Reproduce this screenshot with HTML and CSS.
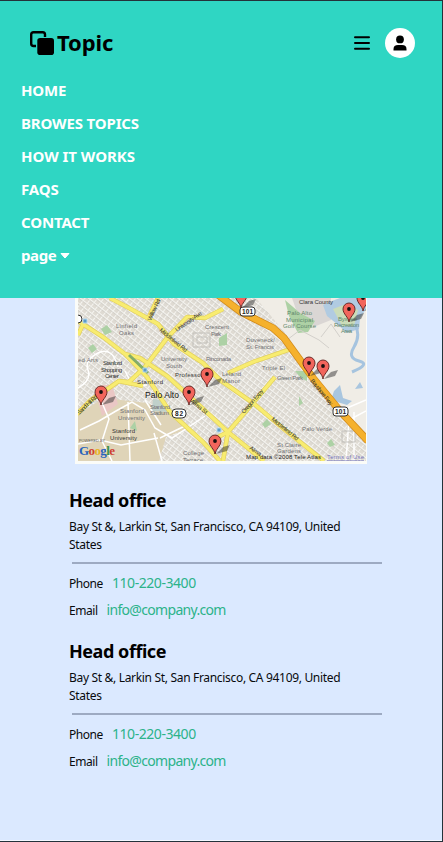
FILE: index.html
```html
<!DOCTYPE html>
<html lang="en">
<head>
<meta charset="utf-8">
<title>Topic</title>
<link rel="stylesheet" href="styles.css">
</head>
<body>
<div class="page">
<header class="header">
  <div class="bar">
    <a class="brand"><svg class="logo" viewBox="0 0 24 24"><path d="M6 15H3.500Q1.200 15 1.200 12.700V3.500Q1.200 1.200 3.500 1.200H12.700Q15 1.200 15 3.500V6" fill="none" stroke="#000" stroke-width="2.400"/><rect x="7.300" y="7" width="16.700" height="17" rx="2.800"/></svg><span>Topic</span></a>
    <div class="tools">
      <svg class="burger" viewBox="0 0 16 14"><path d="M1 1.200H15M1 7H15M1 12.800H15" stroke="#000" stroke-width="2" stroke-linecap="round"/></svg>
      <span class="avatar"><svg viewBox="0 0 14 16"><circle cx="7" cy="4.400" r="3.900"/><path d="M.5 15.500V14Q.5 9.900 5 9.900H9Q13.500 9.900 13.500 14V15.500Z"/></svg></span>
    </div>
  </div>
  <nav class="nav">
    <a class="n-home">HOME</a>
    <a class="n-browse">BROWES TOPICS</a>
    <a class="n-how">HOW IT WORKS</a>
    <a class="n-faq">FAQS</a>
    <a class="n-contact">CONTACT</a>
    <a class="n-page">page <svg class="caret" viewBox="0 0 10 6"><path d="M1 .5H9L5 5Z" fill="#fff" stroke="#fff" stroke-linejoin="round"/></svg></a>
  </nav>
</header>
<main>
  <svg class="map" viewBox="75 298 292 166">
    <defs>
      <pattern id="grid" width="5" height="5" patternUnits="userSpaceOnUse" patternTransform="rotate(38)"><rect width="5" height="5" fill="#dfdbd3"/><path d="M0 .5H5M.5 0V5" stroke="#f5f4f0" stroke-width="1"/><path d="M0 1.500H5" stroke="#c5c2bb" stroke-width=".45"/></pattern>
      <g id="pin"><path d="M1 0 8-7 15-9 12-3Z" fill="#333" opacity=".5"/><path d="M0 0C-.6-5-6-8-6-13A6 6 0 0 1 6-13C6-8 .6-5 0 0Z" fill="#f2655c" stroke="#5b201d" stroke-width=".9"/><circle cy="-13" r="1.900" fill="#17100f"/></g>
      <clipPath id="tile"><rect x="78" y="298" width="288" height="163"/></clipPath>
    </defs>
    <rect x="75" y="298" width="292" height="166" fill="#fbfcf8"/>
    <g clip-path="url(#tile)">
      <rect x="78" y="298" width="288" height="163" fill="url(#grid)"/>
      <path d="M256 298H366V440L340 410 315 378 295 348 285 333Z" fill="#f0ede6"/>
      <path d="M78 414 104 398 147 403 168 412 190 428 166 437 159 461H78Z" fill="#dfd4b8"/>
      <path d="M102 385H112L118 404 102 416 98 401Z" fill="#eac7c5"/>
      <path d="M292 298H331V320L316 326 299 318Z" fill="#dad6d4"/>
      <path d="M285 300 300 313 315 321 308 332 298 333 289 316ZM101 329 107 325 112 332 105 335ZM88 348 93 344 97 349 92 353ZM262 424 267 419 271 424 265 428ZM327 443 331 439 335 445 330 447ZM295 371H307V381L301 378ZM219 338 227 333V345L219 346ZM299 396 303 403 299 406ZM130 428 135 421 137 431Z" fill="#add1a5"/>
      <path d="M153 399 162 400 168 412 152 411Z" fill="#c0d0ca"/>
      <path d="M323 305 332 301 340 298H366V309L360 318 359 329 347 333 337 324 327 316Z" fill="#b1cbe1"/>
      <path d="M333 309 346 304 358 310 354 326 342 326Z" fill="#cbdcb9"/>
      <path d="M355 324Q361 336 354 347T359 361T352 372" fill="none" stroke="#a6c4df" stroke-width="3"/>
      <path d="M331 400 334 391 340 385 343 398 352 401 347 405ZM355 389 360 382 363 388Z" fill="#a9c6df"/>
      <g fill="none" stroke="#fff" stroke-width="1.500"><path d="M78 388Q92 380 88 370T98 353 118 367M80 430 99 421 116 411 132 402 145 410 155 428 172 438 205 416M78 444 100 440 121 445 158 438M100 398 109 419 102 441 112 461M128 402 130 461M154 433 162 461M160 438 187 425M125 371 133 386 147 385M145 400 161 425M340 411 366 400M354 412V461M346 461 349 420 366 411"/></g>
      <path d="M283 343 300 330 319 340 329 348M321 337 331 324 340 337" fill="none" stroke="#d3d0cb"/>
      <path d="M193 333H210V347H193ZM197 337H207V343H197ZM342 431H355V442H342Z" fill="none" stroke="#c2c0bb"/>
      <path class="road-edge" d="M110 298 129 308 158 324 174 344 203 363 220 380 253 403 285 430 324 461M78 321 103 337 125 354 147 377 170 412 203 442 220 461M125 354 140 358 167 376 187 394 228 432 264 461M158 298 148 319M223 309 205 318 187 317 167 338 145 367 129 382 119 381 109 388 91 400 77 414M291 349 253 362 228 373M275 377 253 403 228 432 223 461M118 381 143 386M78 335 84 322M212 440 228 432"/>
      <path class="road" d="M110 298 129 308 158 324 174 344 203 363 220 380 253 403 285 430 324 461M78 321 103 337 125 354 147 377 170 412 203 442 220 461M125 354 140 358 167 376 187 394 228 432 264 461M158 298 148 319M223 309 205 318 187 317 167 338 145 367 129 382 119 381 109 388 91 400 77 414M291 349 253 362 228 373M275 377 253 403 228 432 223 461M118 381 143 386M78 335 84 322M212 440 228 432"/>
      <path d="M129 355 148 373" stroke="#83ac69" stroke-width="3"/>
      <path d="M217 294 241 312 273 328 284 338 313 378 340 411 368 441" fill="none" stroke="#d28b1b" stroke-width="7.500"/>
      <path d="M217 294 241 312 273 328 284 338 313 378 340 411 368 441" fill="none" stroke="#f5b12d" stroke-width="6"/>
      <g class="label">
        <text x="116" y="328" textLength="21">Linfield</text><text x="119" y="335" textLength="15">Oaks</text>
        <text x="205" y="329" textLength="24">Crescent</text><text x="211" y="336" textLength="10">Park</text>
        <text x="161" y="361" textLength="26">University</text><text x="166" y="368" textLength="16">South</text>
        <text x="78" y="362" textLength="20">ed Arts</text><text x="206" y="361" textLength="25">Rinconada</text>
        <text x="246" y="342" textLength="29">Duveneck/</text><text x="246" y="349" textLength="28">St. Francis</text>
        <text x="262" y="370" textLength="23">Triple El</text><text x="222" y="376" textLength="19">Leland</text><text x="222" y="383" textLength="18">Manor</text>
        <text x="277" y="380" textLength="26">Green Park</text><text x="302" y="431" textLength="30">Palo Verde</text>
        <text x="277" y="447" textLength="24">St Claire</text><text x="277" y="453" textLength="24">Gardens</text>
        <text x="183" y="455" textLength="21">College</text><text x="183" y="462" textLength="20">Terrace</text>
        <text x="120" y="413" textLength="24">Stanford</text><text x="118" y="420" textLength="27">University</text>
        <text x="150" y="409" textLength="20">Stanford</text><text x="150" y="415" textLength="19">Stadium</text>
        <g class="green"><text x="287" y="315" textLength="25">Palo Alto</text><text x="286" y="322" textLength="27">Municipal</text><text x="283" y="328" textLength="33">Golf Course</text><text x="338" y="321" textLength="19">Byxbee</text><text x="334" y="327" textLength="25">Recreation</text><text x="341" y="333" textLength="11">Area</text></g>
        <g class="dark"><text x="103" y="365" textLength="19">Stanford</text><text x="101" y="372" textLength="21">Shopping</text><text x="105" y="378" textLength="14">Center</text><text x="112" y="433" textLength="23">Stanford</text><text x="110" y="440" textLength="27">University</text><text x="137" y="384" textLength="26">Stanford</text><text x="175" y="377" textLength="28">Professor</text><text x="299" y="304" textLength="34">Clara County</text></g>
        <text class="city" x="145" y="398" textLength="34">Palo Alto</text>
        <g class="dark"><text transform="translate(159 331) rotate(39)" textLength="34">Middlefield Rd</text><text transform="translate(177 332) rotate(-35)" textLength="31">University Ave</text><text transform="translate(151 321) rotate(-65)" textLength="23">Willow Rd</text><text transform="translate(271 420) rotate(39)" textLength="33">Middlefield Rd</text><text transform="translate(244 414) rotate(-49)" textLength="30">Oregon Expy</text><text transform="translate(310 381) rotate(51)" textLength="32">Bayshore Fwy</text><text transform="translate(190 402) rotate(39)" textLength="20">Alma St</text><text transform="translate(79 415) rotate(-43)" textLength="26">Sand Hill Rd</text><text transform="translate(249 449) rotate(35)" textLength="13">Alma</text></g>
      </g>
      <g class="shield"><rect x="240" y="307" width="15" height="9" rx="3"/><text x="242" y="314" textLength="11">101</text><rect x="333" y="407" width="15" height="9" rx="3"/><text x="335" y="414" textLength="11">101</text><rect x="172" y="409" width="14" height="9" rx="4"/><text x="175" y="416" textLength="8">82</text><circle cx="78" cy="319" r="4"/></g>
      <path d="M83 319H87V323H83ZM143 368H147V372H143ZM217 428H221V432H217Z" fill="#5d9bc9" stroke="#b7d9ee"/>
      <use href="#pin" x="241" y="308"/><use href="#pin" x="349" y="322"/><use href="#pin" x="363" y="311"/>
      <use href="#pin" x="309" y="376"/><use href="#pin" x="323" y="379"/><use href="#pin" x="207" y="387"/>
      <use href="#pin" x="101" y="405"/><use href="#pin" x="189" y="405"/><use href="#pin" x="215" y="454"/>
      <text class="powered" x="79" y="442" textLength="26" lengthAdjust="spacingAndGlyphs">POWERED BY</text>
      <text class="google" x="79" y="455" textLength="36"><tspan fill="#2863bd">G</tspan><tspan fill="#cf3e31">o</tspan><tspan fill="#e9b325">o</tspan><tspan fill="#2863bd">g</tspan><tspan fill="#38914c">l</tspan><tspan fill="#cf3e31">e</tspan></text>
      <text class="credit" x="246" y="459" textLength="75">Map data ©2008 Tele Atlas</text><text class="terms" x="327" y="459" textLength="37">Terms of Use</text>
    </g>
  </svg>
  <section class="office">
    <h2>Head office</h2>
    <p class="address"><span class="line1">Bay St &amp;, Larkin St, San Francisco, CA 94109, United</span> <span>States</span></p>
    <hr>
    <p class="row"><span class="k-phone">Phone</span><a class="phone">110-220-3400</a></p>
    <p class="row"><span class="k-email">Email</span><a class="email">info@company.com</a></p>
  </section>
  <section class="office">
    <h2>Head office</h2>
    <p class="address"><span class="line1">Bay St &amp;, Larkin St, San Francisco, CA 94109, United</span> <span>States</span></p>
    <hr>
    <p class="row"><span class="k-phone">Phone</span><a class="phone">110-220-3400</a></p>
    <p class="row"><span class="k-email">Email</span><a class="email">info@company.com</a></p>
  </section>
</main>
</div>
</body>
</html>
```
FILE: styles.css
```css
* { box-sizing: border-box; }
body { margin: 0; font-family: "Noto Sans", "Open Sans", sans-serif; color: #080a0d; }
.page { height: 842px; overflow: hidden; background: #dbe9ff; border: solid #24323a; border-width: 1px 1px 1px 0; box-shadow: inset 0 -1px #f4f8ff; }
.header { height: 297px; background: #2fd6c3; }
.bar { height: 72px; padding: 12px 27px 0 30px; display: flex; justify-content: space-between; align-items: center; }
.brand { display: flex; align-items: center; gap: 3px; color: #000; font-size: 22px; font-weight: 700; letter-spacing: -.1px; }
.brand span { margin-top: -2px; }
.logo { width: 24px; height: 24px; }
.tools { display: flex; align-items: center; gap: 15px; }
.burger { width: 16px; height: 14px; }
.avatar { width: 30px; height: 30px; border-radius: 50%; background: #fff; display: grid; place-items: center; }
.avatar svg { width: 14px; height: 16px; }
.nav { display: flex; flex-direction: column; padding: 1px 21px; color: #fff; font-size: 15px; font-weight: 700; }
.nav a { height: 33px; line-height: 33px; white-space: nowrap; letter-spacing: -.15px; }
.nav .n-how { letter-spacing: -.02px; }
.nav .n-page { letter-spacing: -.4px; }
.caret { width: 10px; height: 6px; margin-bottom: 2px; }
.map { display: block; width: 292px; height: 166px; margin-left: 75px; }
.road-edge, .road { fill: none; stroke-linejoin: round; }
.road-edge { stroke: #e2d05d; stroke-width: 4.6; }
.road { stroke: #f8ec70; stroke-width: 3.2; }
.label { font: 6px "Liberation Sans", sans-serif; fill: #707073; }
.green { fill: #60866b; }
.dark { fill: #343434; }
.city { font-size: 8.5px; fill: #151515; }
.shield rect, .shield circle { fill: #fff; stroke: #333; }
.shield text { font: bold 6.5px "Liberation Sans", sans-serif; fill: #222; }
.powered { font: 4px "Liberation Sans", sans-serif; fill: #555; }
.google { font: bold 13px "Liberation Serif", serif; }
.credit, .terms { font: 6px "Liberation Sans", sans-serif; fill: #222; }
.terms { fill: #7777bd; text-decoration: underline; }
.office { width: 313px; height: 151px; margin-left: 69px; }
.map + .office { margin-top: 23px; }
h2 { margin: 0; height: 26px; line-height: 26px; font-size: 18px; font-weight: 700; letter-spacing: -.45px; color: #000; }
p { margin: 0; }
.address { height: 36px; margin-top: 5px; font-size: 12px; line-height: 18px; }
.address span { display: block; white-space: nowrap; letter-spacing: -.32px; }
hr { height: 2px; margin: 8px 0 5px 3px; border: 0; background: #9daac2; }
.row { display: flex; align-items: baseline; height: 27px; line-height: 27px; font-size: 12px; white-space: nowrap; }
.row a { color: #2bb38a; font-size: 14px; }
.row span { letter-spacing: -.45px; }
.k-phone { width: 43px; }
.k-email { width: 37.5px; }
.phone { letter-spacing: -.45px; }
.email { letter-spacing: -.68px; }
```
